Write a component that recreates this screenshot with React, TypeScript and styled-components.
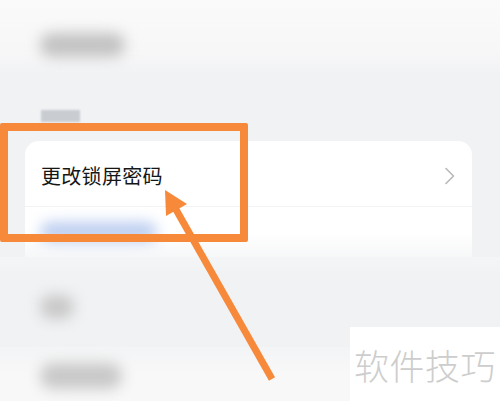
import React from 'react';
import styled, { createGlobalStyle } from 'styled-components';

const GlobalStyle = createGlobalStyle`
  html, body {
    margin: 0;
    padding: 0;
    background: #f1f2f4;
    font-family: 'Noto Sans CJK SC', 'Noto Sans', sans-serif;
  }
  #root {
    width: 500px;
    height: 401px;
    overflow: hidden;
  }
`;

const ORANGE = '#f7893b';

const Screen = styled.div`
  position: relative;
  width: 500px;
  height: 401px;
  display: flex;
  flex-direction: column;
  overflow: hidden;
  background: #f1f2f4;
`;

const Section = styled.div<{ $h: number; $bg: string; $top: number }>`
  height: ${(p) => p.$h}px;
  flex-shrink: 0;
  background: ${(p) => p.$bg};
  padding: ${(p) => p.$top}px 0 0 40px;
  box-sizing: border-box;
`;

const Blur = styled.div<{ $w: number; $h: number; $color: string; $blur: number }>`
  width: ${(p) => p.$w}px;
  height: ${(p) => p.$h}px;
  background: ${(p) => p.$color};
  border-radius: ${(p) => p.$h / 2}px;
  filter: blur(${(p) => p.$blur}px);
`;

const Label = styled.div`
  width: 39px;
  height: 12px;
  margin-left: 1px;
  background: #c9ccd1;
  filter: blur(1.2px);
`;

const CardWrap = styled.div`
  flex-shrink: 0;
  padding: 0 28px 0 25px;
  background: #f1f2f4;
`;

const Card = styled.div`
  border-radius: 14px 14px 0 0;
  display: flex;
  flex-direction: column;
  background: linear-gradient(#ffffff 0, #ffffff 80%, #f6f7f8 100%);
`;

const Row = styled.div`
  height: 66px;
  display: flex;
  align-items: center;
  justify-content: space-between;
  padding: 4px 16px 0 16px;
  box-sizing: border-box;
  border-bottom: 1px solid #f2f3f5;
`;

const RowText = styled.span`
  font-size: 20px;
  font-weight: 400;
  color: #161616;
  letter-spacing: 0.3px;
`;

const SubRow = styled.div`
  height: 50px;
  padding: 15px 0 0 15px;
  box-sizing: border-box;
`;

const Chevron = () => (
  <svg width="12" height="18" viewBox="0 0 12 18">
    <path d="M2 1.5 L9.5 9 L2 16.5" fill="none" stroke="#b8b8b8" strokeWidth="1.6" strokeLinecap="round" strokeLinejoin="round" />
  </svg>
);

const Highlight = styled.div`
  position: absolute;
  left: 0;
  top: 123px;
  width: 248px;
  height: 119px;
  border: 8px solid ${ORANGE};
  border-radius: 2px;
  box-sizing: border-box;
`;

const ArrowLayer = styled.svg`
  position: absolute;
  left: 0;
  top: 0;
  pointer-events: none;
`;

const Watermark = styled.div`
  position: absolute;
  left: 350px;
  top: 327px;
  width: 150px;
  height: 74px;
  background: #ffffff;
  display: flex;
  align-items: center;
  padding-left: 4px;
  box-sizing: border-box;
  font-size: 35px;
  font-weight: 300;
  color: #cdcdcd;
  letter-spacing: 0.5px;
`;

export default function App() {
  return (
    <>
      <GlobalStyle />
      <Screen>
        <Section $h={75} $bg="linear-gradient(#fafafa 0, #f7f7f8 70%, #f1f2f4 100%)" $top={33}>
          <Blur $w={85} $h={24} $color="#c2c2c2" $blur={7} />
        </Section>
        <Section $h={66} $bg="#f1f2f4" $top={35}>
          <Label />
        </Section>
        <CardWrap>
          <Card>
            <Row>
              <RowText>更改锁屏密码</RowText>
              <Chevron />
            </Row>
            <SubRow>
              <Blur $w={117} $h={20} $color="#bccef0" $blur={7} />
            </SubRow>
          </Card>
        </CardWrap>
        <Section $h={90} $bg="linear-gradient(#f4f5f6 0, #f1f2f4 20%, #f1f2f4 100%)" $top={38}>
          <Blur $w={34} $h={24} $color="#c8c8c8" $blur={7} />
        </Section>
        <Section $h={90} $bg="linear-gradient(#f3f4f5 0, #f8f8f9 30%)" $top={16}>
          <Blur $w={82} $h={26} $color="#c8c8c8" $blur={7} />
        </Section>

        <Highlight />
        <ArrowLayer width="500" height="401" viewBox="0 0 500 401">
          <line x1="272" y1="379" x2="174" y2="206" stroke={ORANGE} strokeWidth="7" />
          <polygon points="165,190 187,204 166,216" fill={ORANGE} />
        </ArrowLayer>
        <Watermark>软件技巧</Watermark>
      </Screen>
    </>
  );
}
